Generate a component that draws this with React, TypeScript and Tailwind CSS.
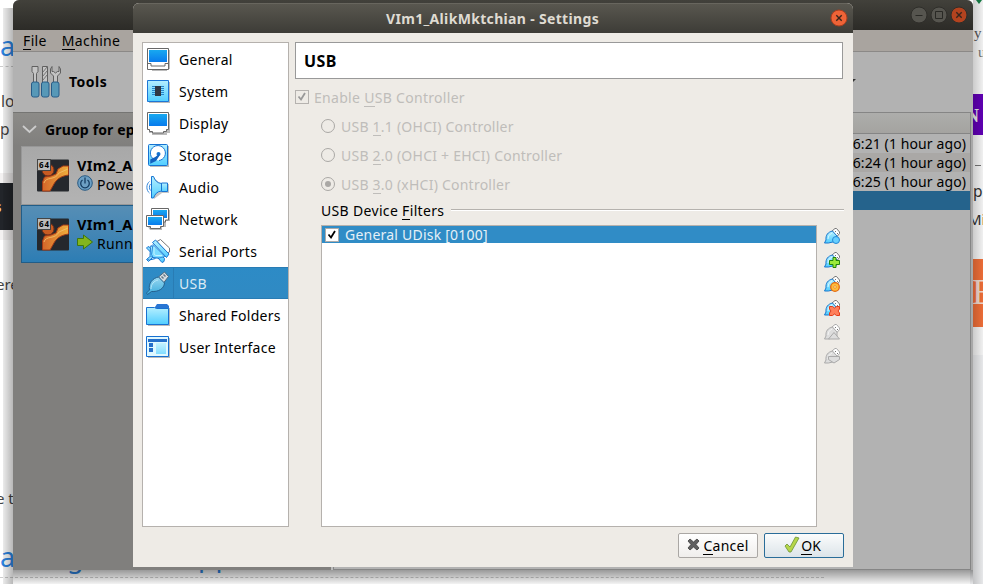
import React from "react";

const font = "font-['Noto_Sans','Open_Sans',sans-serif]";

function Monitor({ base }: { base?: boolean }) {
  return (
    <svg width="24" height="24" viewBox="0 0 24 24">
      <path d="M3 3h21v19h-3v2H6v-2H3z" fill="#bbb" />
      {base ? (
        <path d="M1.5 1.5h21v21h-21z" fill="#fff" stroke="#686868" />
      ) : (
        <path d="M1.5 1.5h21v17h-2v2h-3v1.500h-11v-1.500h-3v-2h-2z" fill="#fff" stroke="#686868" />
      )}
      <path d="M3 3h18v12H3z" fill="url(#screen)" />
      {base && <path d="M2 16.500h3v2.500h14v-2.500h3" fill="none" stroke="#686868" />}
    </svg>
  );
}

function Chip() {
  return (
    <svg width="24" height="24" viewBox="0 0 24 24">
      <path d="M3 3h21v21H3z" fill="#bbb" />
      <path d="M1.500 1.500h21v21h-21z" fill="url(#cyan)" stroke="#1d76d6" />
      <path d="M6 7.500h12M6 9.500h12M6 11.500h12M6 13.500h12M6 15.500h12" stroke="#2685cb" />
      <path d="M9 7h6v10H9z" fill="#303743" />
    </svg>
  );
}

function Disk() {
  return (
    <svg width="24" height="24" viewBox="0 0 24 24">
      <rect x="4" y="3" width="19" height="21" fill="#bbb" />
      <rect x="2.500" y="1.500" width="19" height="21" rx="1" fill="url(#cyan)" stroke="#1673d2" />
      <path d="M9 17a7.500 7.500 0 1 1 4 .500" fill="#fff" stroke="#1673d2" />
      <circle cx="12.500" cy="11" r="2" fill="#1673d2" />
      <path d="M13 12l-3.500 5.500-4.500 2v-2.500l4-2z" fill="#1261c0" stroke="#1261c0" strokeWidth="1.500" />
    </svg>
  );
}

function Speaker() {
  return (
    <svg width="24" height="24" viewBox="0 0 24 24">
      <path d="M8 3l7 6h8v9h-7l-8 6z" fill="#c5c5c5" />
      <path d="M5.500 1.500h2C9 5.500 11 8 15.500 8.500v7.500C11 16.500 9 19 7.500 23h-2z" fill="url(#cyan)" stroke="#1875d2" />
      <path d="M15.500 8h6v8.500h-6z" fill="url(#cyan)" stroke="#1875d2" />
      <path d="M3.500 6.500C0 9 0 15.500 3.500 18M4.500 9c-1.500 1.500-1.500 5 0 6.500" fill="none" stroke="#3689da" />
    </svg>
  );
}

function Network() {
  return (
    <svg width="24" height="24" viewBox="0 0 24 24">
      <path d="M8 3h16v11h-4v6h-4v3H4l-2-3z" fill="#bbb" />
      <path d="M5.500 1.500h17v11.500h-3v2h-11v-2h-3z" fill="#fff" stroke="#686868" />
      <path d="M7 3h14v8H7z" fill="url(#screen)" />
      <path d="M.500 8.500h17v11h-3v2h-10v-2h-4z" fill="#fff" stroke="#686868" />
      <path d="M2 10h14v8H2z" fill="url(#screen)" />
    </svg>
  );
}

function Serial() {
  return (
    <svg width="24" height="24" viewBox="0 0 24 24">
      <path d="M11 2.500l3.500-2L23.500 9v4l-2.500 1z" fill="#fff" stroke="#777" />
      <path d="M4 8.500L2 7.500.500 9l4 4M9.500 19.500L3.500 21l-2-.500M4.500 17l-4 3.500 2 2L6 19" fill="#8bdfff" stroke="#1976d1" />
      <path d="M5 6.500l13.500 13-.500 3-2 1-4-4.500-6-.500-2-2 .500-8z" fill="url(#cyan)" stroke="#1976d1" />
      <path d="M6.500 3.500l3-2.500 13.500 14-2.500 3.500z" fill="url(#cyan)" stroke="#1976d1" />
      <path d="M7 5.500l12 12-6 1.500-6-.500-1.500-3z" fill="#7bdcff" stroke="#1976d1" strokeWidth=".8" />
      <path d="M8 8v7.500l2 1h6" fill="none" stroke="#c5f3ff" />
    </svg>
  );
}

function Plug() {
  return (
    <svg width="24" height="24" viewBox="0 0 24 24">
      <path d="M12.500 6l6-5 4 4.500-5 6.500z" fill="#d5dce2" stroke="#51697c" />
      <path d="M17.500 3.500l2 2M15.500 5.500l2 2" stroke="#657887" strokeWidth="1.500" />
      <path d="M12.500 6C7 7 2 12 3.500 19L.500 22l1 1.500 4-3C12 21 18 18 18.500 12z" fill="url(#usb)" stroke="#25618f" />
      <path d="M5 18c0-5 3-8 7-9" fill="none" stroke="#b6e8fa" strokeWidth="1" />
    </svg>
  );
}

function Folder() {
  return (
    <svg width="24" height="24" viewBox="0 0 24 24">
      <path d="M2 5h22v18H2z" fill="#bbb" />
      <path d="M9 4l2-3h10l2 2v5H9z" fill="#2875d3" />
      <path d="M.500 4.500h8l2 1h12v16H.500z" fill="url(#cyan)" stroke="#1871d1" />
    </svg>
  );
}

function Interface() {
  return (
    <svg width="24" height="24" viewBox="0 0 24 24">
      <path d="M2 3h22v20H2z" fill="#bbb" />
      <path d="M.500 1.500h22v20H.500z" fill="#dff8ff" stroke="#1770d1" />
      <path d="M2 4h19v3H2zM3 8h4v4H3zM3 13h4v4H3z" fill="#246fca" />
      <path d="M10 8h10v11H10z" fill="url(#cyan)" opacity=".65" />
    </svg>
  );
}

const pages: [string, React.ReactNode, string][] = [
  ["General", <Monitor base />, "tracking-[0.3px]"],
  ["System", <Chip />, "tracking-[0.3px]"],
  ["Display", <Monitor />, "tracking-[0.25px]"],
  ["Storage", <Disk />, "tracking-[0.3px]"],
  ["Audio", <Speaker />, "tracking-[0.4px]"],
  ["Network", <Network />, "tracking-[0.4px]"],
  ["Serial Ports", <Serial />, "tracking-[0.3px]"],
  ["USB", <Plug />, "tracking-[0.3px]"],
  ["Shared Folders", <Folder />, "tracking-[0.25px]"],
  ["User Interface", <Interface />, "tracking-[0.22px]"],
];

function FilterIcon({ kind }: { kind: number }) {
  const off = kind > 3;
  const line = off ? "#aaa" : "#1976cc";
  return (
    <svg width="16" height="16" viewBox="0 0 16 16">
      <path d="M8 3l3-2.500h1.500L15.500 4v1.500L13 8.500z" fill="#fff" stroke={off ? "#aaa" : "#777"} />
      <path d="M11.500 3v1M13.500 5v1" stroke="#777" />
      <path d="M8.500 3C4 4 1.500 7 2 12L.500 15h4L13 13V8z" fill={off ? "#ddd" : "url(#cyan)"} stroke={line} />
      <path d="M4 11c0-3 2-5 4-6" fill="none" stroke={off ? "#f5f5f5" : "#d9f8ff"} />
      {kind === 0 && <circle cx="12" cy="12" r="3.500" fill="#67cfff" stroke="#2588d4" />}
      {kind === 1 && <path d="M9 5.500h3v3h3.500v4H12v3H9v-3H5.500v-4H9z" fill="#9bea3a" stroke="#24850b" />}
      {kind === 2 && (
        <>
          <circle cx="11" cy="11" r="4.300" fill="#ffbd3b" stroke="#e46b12" strokeWidth="1.300" />
          <circle cx="11" cy="11" r="1.300" fill="#fff1b3" stroke="#e98722" strokeWidth=".8" />
        </>
      )}
      {kind === 3 && <path d="M5.500 6.500h3l2 1.500 2-1.500h3v2.500L14 11l1.500 2v2.500h-3l-2-1.500-2 1.500h-3V13L7 11 5.500 9z" fill="#ff805b" stroke="#e33b1a" />}
      {kind === 4 && <path d="M4.500 15L10 8.500l5.500 6.500z" fill="#ddd" stroke="#aaa" />}
      {kind === 5 && <path d="M4.500 8.500h11v3L10 15l-5.500-3.500z" fill="#ddd" stroke="#aaa" />}
    </svg>
  );
}

function U({ children }: { children: React.ReactNode }) {
  return <span className="border-b border-current inline-block leading-[17px]">{children}</span>;
}

function MachineRow({ name, state, on }: { name: string; state: string; on?: boolean }) {
  return (
    <div className={`flex shrink-0 pl-[15px] border ${on ? "h-[58px] pt-[12px] bg-linear-to-b from-[#568eb5] to-[#2c7db4] border-[#215d88]" : "h-[59px] pt-[12px] bg-linear-to-b from-[#a8a8a8] to-[#b3b3b3] border-[#979797]"}`}>
      <svg className="shrink-0" width="32" height="33" viewBox="0 0 32 33">
        <rect y="0.500" width="32" height="32" rx="1" fill="#25282d" />
        <circle cx="11" cy="11" r="6" fill="#c85b22" stroke="#702f1b" />
        <path d="M31.500 7H26L21 10l-2 5-5 2-6.500 1-2 5v9H13l4.500-8C21 19 25 17 31.500 16z" fill="url(#orange)" stroke="#a33a16" />
        <path d="M7 24c2-7 11-2 15-10l9-4" fill="none" stroke="#f4c46c" strokeWidth=".8" />
        <rect x=".500" y=".500" width="13" height="11" fill="#bbb" stroke="#444" />
        <text x="7" y="8.800" textAnchor="middle" fontSize="8" fontWeight="700" fontFamily="Noto Sans" textLength="10">64</text>
      </svg>
      <div className="ml-[8px] -mt-[3px] leading-[19px] whitespace-nowrap">
        <div className="font-bold text-[14.500px] tracking-[0.35px]">{name}</div>
        <div className="flex items-center gap-[4px] text-[14px] tracking-[0.3px]">
          {on ? (
            <svg className="-mt-[3px]" width="16" height="16" viewBox="0 0 16 16"><path d="M.500 4.500h6V1l9 7-9 7v-3.500h-6z" fill="#83b51d" stroke="#3f760e" /></svg>
          ) : (
            <svg className="-mt-[3px]" width="16" height="16" viewBox="0 0 16 16"><circle cx="8" cy="8" r="7.300" fill="#6c9fc4" stroke="#295a82" /><path d="M5.500 5a4.300 4.300 0 1 0 5 0M8 2.500v6" fill="none" stroke="#163d62" strokeWidth="1.300" /></svg>
          )}
          <span>{state}</span>
        </div>
      </div>
    </div>
  );
}

function RoundButton({ kind, bright }: { kind: string; bright?: boolean }) {
  const close = kind === "close";
  return (
    <svg width="18" height="18" viewBox="0 0 18 18">
      <circle cx="9" cy="9" r="8" fill={close ? (bright ? "#ee6337" : "#b3431f") : "#56554f"} stroke={bright ? "#a63e20" : "#2f2e2a"} />
      {close && <path d="M6.300 6.300l5.400 5.400M11.700 6.300l-5.400 5.400" stroke="#38251c" strokeWidth="1.400" />}
      {kind === "min" && <path d="M5.500 9.500h7" stroke="#292925" />}
      {kind === "max" && <path d="M5.500 5.500h7v7h-7z" fill="none" stroke="#292925" />}
    </svg>
  );
}

function Radio({ on, n, rest }: { on?: boolean; n: string; rest: string }) {
  return (
    <div className="flex items-center h-[29px] pl-[26px] whitespace-pre">
      <span className="w-[14px] h-[14px] -mt-[2px] rounded-full border border-[#aaa8a5] flex items-center justify-center">
        {on && <span className="w-[6px] h-[6px] rounded-full bg-[#aaa8a5]" />}
      </span>
      <span className="ml-[6px]">USB <U>{n}</U>{rest}</span>
    </div>
  );
}

export default function App() {
  return (
    <div className={`relative w-[983px] h-[584px] overflow-hidden bg-white text-[14px] text-black ${font}`}>
      <svg className="absolute w-0 h-0">
        <defs>
          <linearGradient id="screen" x2="0" y2="1"><stop stopColor="#18a9f0" /><stop offset="1" stopColor="#087bed" /></linearGradient>
          <linearGradient id="cyan" x2="0" y2="1"><stop stopColor="#b5efff" /><stop offset="1" stopColor="#51ceff" /></linearGradient>
          <linearGradient id="usb" x2="0" y2="1"><stop stopColor="#99d7ef" /><stop offset="1" stopColor="#3cadde" /></linearGradient>
          <linearGradient id="orange" x2="1" y2="0"><stop stopColor="#d4662a" /><stop offset="1" stopColor="#efad3c" /></linearGradient>
        </defs>
      </svg>

      <div className="absolute left-0 top-0 w-[14px] h-[584px] bg-white overflow-hidden whitespace-nowrap text-[#444]">
        <span className="absolute left-0 top-[26px] text-[27px] text-[#2d86e4]">a</span>
        <div className="absolute top-[66px] w-full border-t border-dashed border-[#ccc]" />
        <span className="absolute left-[1px] top-[90px] text-[15.500px]">lo</span>
        <span className="absolute left-0 top-[118px] text-[15.500px]">p</span>
        <div className="absolute top-[173px] w-full h-[67px] bg-[#f3f1f1]" />
        <div className="absolute top-[183px] w-full h-[47px] bg-[#22252a]" />
        <span className="absolute -left-[6px] top-[195px] text-[15px] font-bold text-[#f5cf98]">s</span>
        <span className="absolute -left-[4px] top-[273px] text-[15px]">ere</span>
        <span className="absolute -left-[4px] top-[487px] text-[15px]">e t</span>
        <span className="absolute left-0 top-[537px] text-[27px] text-[#2d86e4]">a</span>
      </div>
      <span className="absolute left-[67px] top-[537px] text-[27px] text-[#2d86e4]">g</span>
      <span className="absolute left-[198px] top-[536px] text-[27px] tracking-[1px] text-[#2d86e4]">pp</span>
      <div className="absolute left-0 top-[577px] w-[824px] border-t border-dashed border-[#ccc]" />
      <div className="absolute left-[970px] top-0 w-[13px] h-[584px] overflow-hidden bg-[#fafafa] text-[#333]">
        <svg className="absolute left-[4px] top-0" width="9" height="4"><path d="M2 0h6L5 4z" fill="#158348" /></svg>
        <span className="absolute left-[4px] top-[22px] text-[15px] text-[#555] font-['Liberation_Serif',serif]">y</span>
        <span className="absolute left-[8px] top-[41px] text-[15px] text-[#777] font-['Liberation_Serif',serif]">u</span>
        <div className="absolute top-[94px] w-full h-[41px] bg-[#6200b8]" />
        <span className="absolute -left-[4px] top-[104px] text-[18px] leading-[24px] text-[#eee] font-bold font-['Liberation_Serif',serif]">N</span>
        <div className="absolute left-[5px] top-[165px] w-[6px] h-[1px] bg-[#777]" />
        <span className="absolute left-[3px] top-[180px] text-[15.500px]">p</span>
        <span className="absolute -left-[2px] top-[208px] text-[15px]">Mi</span>
        <div className="absolute top-[259px] w-full h-[68px] bg-[#f4713a]" />
        <span className="absolute left-[2px] top-[272px] text-[36px] leading-[40px] text-[#f6ddd2] font-['Liberation_Serif',serif]">B</span>
        <div className="absolute top-[355px] w-full h-[229px] bg-[#f0f1f3]" />
      </div>

      <div className="absolute left-[3px] top-[8px] w-[10px] h-[576px] bg-linear-to-r from-[#00000014] to-[#00000048]" />
      <div className="absolute left-[13px] top-[570px] w-[960px] h-[14px] bg-linear-to-b from-[#00000066] to-[#0000000c]" />
      <div className="absolute left-[973px] top-0 w-[10px] h-[584px] bg-linear-to-r from-[#00000030] to-[#0000000a]" />

      <div className="absolute left-[13px] top-0 w-[960px] h-[570px] flex flex-col bg-[#b2b2b2] rounded-t-[6px] overflow-hidden">
        <div className="h-[30px] shrink-0 bg-linear-to-b from-[#42413b] to-[#2c2b27] flex items-center justify-end gap-[2px] pr-[5px]">
          <RoundButton kind="min" /><RoundButton kind="max" /><RoundButton kind="close" />
        </div>
        <div className="h-[22px] shrink-0 bg-[#a9a49f] border-b border-[#8b8987] flex items-center pl-[10px] gap-[15px] tracking-[0.35px]">
          <span><U>F</U>ile</span><span><U>M</U>achine</span>
        </div>
        <div className="h-[60px] shrink-0 flex items-center pl-[17px] relative">
          <svg width="32" height="34" viewBox="0 0 32 34">
            <path d="M2 1.500h6v5l-1.500 2v10h-3v-10L2 6.500zM12.500 1.500h5v17h-5z" fill="#c5c5c5" stroke="#606060" />
            <path d="M13 7l4-5M13 11l4-5M13 15l4-5" stroke="#777" />
            <path d="M22 1.500l-1.500 2.500v4l3 3v8h4v-8l3-3V4L29 1.500v5h-1.500l-2 1.500-2-1.500H22z" fill="#c3c3c3" stroke="#606060" />
            {[1.5, 11.5, 21.5].map((x) => <rect key={x} x={x} y="17" width="7.500" height="15" rx="2" fill="#5798b7" stroke="#285c88" />)}
          </svg>
          <span className="ml-[7px] -mt-[2px] font-bold text-[14px] tracking-[0.5px]">Tools</span>
          <svg className="absolute left-[839px] top-[27px]" width="4" height="3"><path d="M0 0h4L1 3z" fill="#333" /></svg>
        </div>
        <div className="flex h-[458px] shrink-0">
          <div className="w-[318px] bg-[#807f7d] flex flex-col border-t border-[#757573]">
            <div className="h-[33px] shrink-0 bg-linear-to-b from-[#8c8b88] to-[#807f7d] flex items-center pl-[9px]">
              <svg width="15" height="9" viewBox="0 0 15 9"><path d="M1 1l6.500 6L14 1" fill="none" stroke="#ccc" strokeWidth="1.800" /></svg>
              <span className="ml-[8px] font-bold text-[14px] tracking-[0.15px] whitespace-nowrap">Gruop for epam</span>
            </div>
            <div className="pl-[8px] flex flex-col">
              <MachineRow name="VIm2_AlikMktchian" state="Powered Off" />
              <MachineRow name="VIm1_AlikMktchian" state="Running" on />
            </div>
          </div>
          <div className="w-[2px] bg-[#bbb]" />
          <div className="w-[638px] border border-[#858585] flex flex-col text-right whitespace-nowrap text-[14px] tracking-[0.1px]">
            <div className="h-[21px] bg-linear-to-b from-[#adadab] to-[#a4a3a0] border-b border-[#858585]" />
            <div className="h-[19px] leading-[20px] pr-[4px]">6:21 (1 hour ago)</div>
            <div className="h-[19px] leading-[20px] pr-[4px] bg-[#aaa8a6]">6:24 (1 hour ago)</div>
            <div className="h-[19px] leading-[20px] pr-[4px]">6:25 (1 hour ago)</div>
            <div className="h-[19px] bg-[#25638c]" />
          </div>
          <div className="w-[2px] bg-[#a8a8a8]" />
        </div>
      </div>

      <div className="absolute left-[133px] top-[3px] w-[720px] h-[564px] bg-[#eeebe6] flex flex-col rounded-t-[6px] overflow-hidden">
        <div className="h-[30px] shrink-0 bg-linear-to-b from-[#59574f] to-[#3d3c37] border-t border-[#68665e] flex items-center">
          <div className="w-[17px] ml-[5px]" />
          <div className="grow text-center font-bold text-[14px] tracking-[0.33px] text-[#dfdbd2]">VIm1_AlikMktchian - Settings</div>
          <div className="mr-[5px] -mt-[2px]"><RoundButton kind="close" bright /></div>
        </div>
        <div className="flex gap-[6px] pl-[9px] pt-[9px]">
          <div className="w-[147px] h-[485px] bg-white border border-[#b5b1ad]">
            {pages.map(([name, icon, cls]) => (
              <div key={name} className={`h-[32px] flex items-center whitespace-nowrap ${name === "USB" ? "bg-linear-to-b from-[#2d8bc6] to-[#308ac3] border-y border-[#297cb4] text-[#dceaf4]" : ""}`}>
                <span className="ml-[3px] w-[24px] h-[24px]">{icon}</span>
                <span className={`ml-[3px] h-full w-px ${name === "USB" ? "bg-[#297cb4]" : ""}`} />
                <span className={`ml-[5px] ${cls}`}>{name}</span>
              </div>
            ))}
          </div>
          <div className="w-[549px]">
            <div className="w-[548px] h-[37px] bg-white border border-[#999] flex items-center pl-[8px] font-bold text-[16px] tracking-[0.4px]">USB</div>
            <div className="mt-[4px] text-[#bfbdba] tracking-[0.23px]">
              <div className="h-[29px] flex items-center whitespace-pre">
                <span className="w-[14px] h-[14px] -mt-[1px] border border-[#b5b2af] flex items-center justify-center">
                  <svg width="10" height="10" viewBox="0 0 10 10"><path d="M1.500 4.500l2.500 3L8 1" fill="none" stroke="#999" strokeWidth="1.800" /></svg>
                </span>
                <span className="ml-[5px] tracking-[0.3px]">Enable <U>U</U>SB Controller</span>
              </div>
              <Radio n="1" rest=".1 (OHCI) Controller" />
              <Radio n="2" rest=".0 (OHCI + EHCI) Controller" />
              <Radio n="3" rest=".0 (xHCI) Controller" on />
            </div>
            <div className="h-[26px] pb-[3px] pl-[26px] flex items-center">
              <span className="w-[130px] -mt-[1px] tracking-[0.33px] whitespace-nowrap">USB Device <U>F</U>ilters</span>
              <span className="grow h-[2px] -mt-[1px] bg-[#b5b2ae] border-b border-white" />
            </div>
            <div className="flex pl-[26px]">
              <div className="w-[496px] h-[302px] bg-white border border-[#b5b1ad]">
                <div className="h-[17px] bg-[#308cc6] text-[#e5f0f7] flex items-center pl-[3px]">
                  <span className="w-[14px] h-[14px] bg-white border border-[#aaa] flex items-center justify-center">
                    <svg width="10" height="10" viewBox="0 0 10 10"><path d="M1.500 4.500l2.500 3L8 1" fill="none" stroke="#000" strokeWidth="1.800" /></svg>
                  </span>
                  <span className="ml-[6px] tracking-[0.22px] whitespace-nowrap">General UDisk [0100]</span>
                </div>
              </div>
              <div className="ml-[7px] pt-[3px] flex flex-col gap-[8px]">
                {[0, 1, 2, 3, 4, 5].map((k) => <FilterIcon key={k} kind={k} />)}
              </div>
            </div>
            <div className="flex justify-end gap-[6px] mt-[6px]">
              <div className="w-[80px] h-[25px] flex items-center justify-center rounded-[2px] border border-[#aaa7a4] bg-linear-to-b from-white to-[#f0eeec]">
                <svg className="-mt-[2px]" width="13" height="13" viewBox="0 0 13 13"><path d="M1 3l2-2 3.500 3L10 1l2 2-3 3.500L12 10l-2 2-3.500-3L3 12l-2-2 3-3.500z" fill="#606060" stroke="#3e3e3e" strokeWidth=".8" /></svg>
                <span className="ml-[3px] tracking-[0.25px]"><U>C</U>ancel</span>
              </div>
              <div className="w-[80px] h-[25px] flex items-center justify-center rounded-[2px] border border-[#2a6d99] bg-linear-to-b from-[#fbfcfc] to-[#dce4e9]">
                <svg className="-mt-[2px]" width="16" height="17" viewBox="0 0 16 17"><path d="M1 10l2-2 3 3 5.500-10 3.500 1L7 16H5z" fill="#b5d64a" stroke="#6b9235" strokeWidth=".8" /></svg>
                <span className="ml-[1px] mr-[3px]"><U>O</U>K</span>
              </div>
            </div>
          </div>
        </div>
      </div>
    </div>
  );
}
